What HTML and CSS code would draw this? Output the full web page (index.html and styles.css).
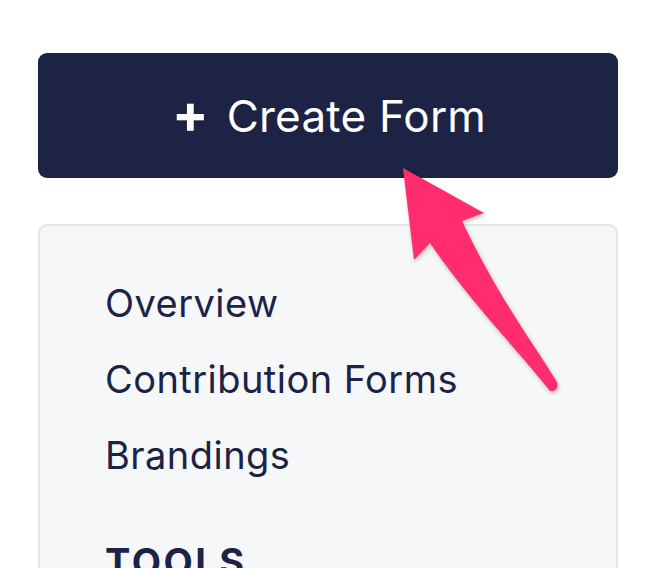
FILE: index.html
```html
<!DOCTYPE html>
<html>
<head>
<meta charset="utf-8">
<link rel="stylesheet" href="styles.css">
</head>
<body>
<div class="page">
  <button class="create-btn"><span class="plus">+</span><span>Create Form</span></button>
  <nav class="panel">
    <ul class="nav-list">
      <li>Overview</li>
      <li>Contribution Forms</li>
      <li>Brandings</li>
    </ul>
    <h3 class="section-title">TOOLS</h3>
  </nav>
  <svg class="arrow" width="200" height="260" viewBox="360 150 200 260">
    <path d="M403 168 L484 213 L462 221 C 500 300 530 338 557 382 Q 559 392 550 391 C 518 350 470 302 430 243 L414 260 Z" fill="#ff2d6e"/>
  </svg>
</div>
</body>
</html>
```
FILE: styles.css
```css
html, body {
  margin: 0;
  padding: 0;
  background: #ffffff;
}
body {
  font-family: Inter, "Noto Sans", sans-serif;
  color: #1b2346;
  overflow: hidden;
}
.page {
  position: relative;
  padding: 53px 46px 0 38px;
  display: flex;
  flex-direction: column;
  gap: 46px;
}
.create-btn {
  width: 580px;
  height: 125px;
  border: none;
  border-radius: 9px;
  background: #1c2345;
  color: #ffffff;
  font-family: Inter, "Noto Sans", sans-serif;
  font-size: 44px;
  font-weight: 400;
  letter-spacing: 0.2px;
  display: flex;
  align-items: center;
  justify-content: center;
  gap: 18px;
  padding: 0 0 0 2px;
}
.plus {
  font-weight: 700;
  font-size: 54px;
  line-height: 1;
  margin-top: -4px;
}
.panel {
  width: 580px;
  box-sizing: border-box;
  border: 2px solid #e2e5eb;
  border-radius: 9px;
  background: #f6f7f9;
  padding: 39px 0 0 65px;
  min-height: 400px;
}
.nav-list {
  list-style: none;
  margin: 0;
  padding: 0;
}
.nav-list li {
  font-size: 38px;
  line-height: 76px;
  letter-spacing: 0.45px;
}
.section-title {
  margin: 46px 0 0 0;
  font-size: 38px;
  font-weight: 700;
  letter-spacing: 2.5px;
}
.arrow {
  position: absolute;
  left: 360px;
  top: 150px;
  filter: drop-shadow(1px 2px 2px rgba(0,0,0,0.25));
}
```
